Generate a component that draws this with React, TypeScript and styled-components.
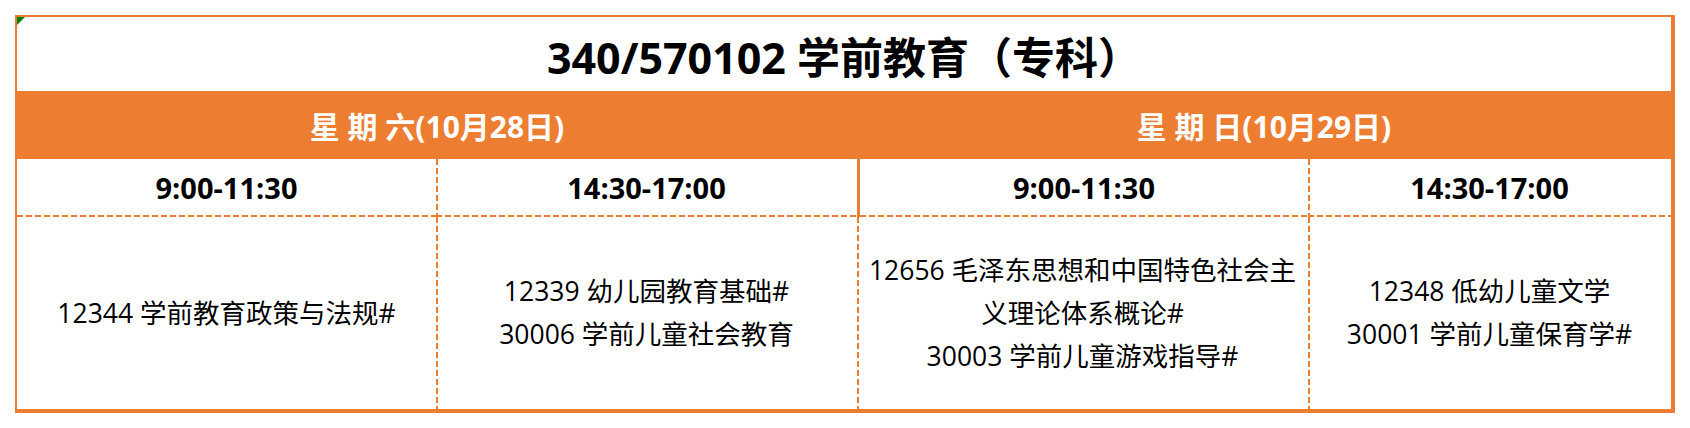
import React from "react";
import styled, { createGlobalStyle, css } from "styled-components";

const ORANGE = "#ED7D31";

type Session = {
    time: string;
    lines: string[];
    solidLeft?: boolean;
};

type Day = {
    label: string;
    sessions: Session[];
};

const days: Day[] = [
    {
        label: "星 期 六(10月28日)",
        sessions: [
            { time: "9:00-11:30", lines: ["12344 学前教育政策与法规#"] },
            { time: "14:30-17:00", lines: ["12339 幼儿园教育基础#", "30006 学前儿童社会教育"] },
        ],
    },
    {
        label: "星 期 日(10月29日)",
        sessions: [
            {
                time: "9:00-11:30",
                lines: ["12656 毛泽东思想和中国特色社会主", "义理论体系概论#", "30003 学前儿童游戏指导#"],
                solidLeft: true,
            },
            { time: "14:30-17:00", lines: ["12348 低幼儿童文学", "30001 学前儿童保育学#"] },
        ],
    },
];

// excel-ish dashes: 6px on, 3px off
const dashV = `repeating-linear-gradient(to bottom, ${ORANGE} 0 6px, transparent 6px 9px)`;
const dashH = `repeating-linear-gradient(to right, ${ORANGE} 0 6px, transparent 6px 9px)`;

const GlobalStyle = createGlobalStyle`
    html, body {
        margin: 0;
        padding: 0;
        background: #ffffff;
    }
    body {
        font-family: "Open Sans", "Noto Sans CJK SC", sans-serif;
    }
`;

const Page = styled.div`
    padding: 15px 0 0 15px;
`;

const Table = styled.div`
    position: relative;
    display: grid;
    grid-template-columns: 419px 421px 451px 363px;
    grid-template-rows: 74px 68px 58px 192px;
    width: 1654px;
    border-top: 2px solid ${ORANGE};
    border-left: 2px solid ${ORANGE};
    border-right: 4px solid ${ORANGE};
    border-bottom: 4px solid ${ORANGE};
    color: #000;
`;

const Marker = styled.div`
    position: absolute;
    top: 0;
    left: 0;
    width: 0;
    height: 0;
    border-top: 8px solid #008000;
    border-right: 8px solid transparent;
`;

const Title = styled.div`
    grid-column: 1 / span 4;
    display: flex;
    align-items: center;
    justify-content: center;
    font-size: 43px;
    font-weight: 700;
    padding-top: 2px;
`;

const DayCell = styled.div`
    grid-column: span 2;
    display: flex;
    align-items: center;
    justify-content: center;
    background: ${ORANGE};
    color: #fff;
    font-size: 30px;
    font-weight: 700;
    white-space: pre;
`;

const TimeCell = styled.div<{ $left?: "solid" | "dashed" }>`
    display: flex;
    align-items: center;
    justify-content: center;
    box-sizing: border-box;
    font-size: 29px;
    font-weight: 700;
    padding-bottom: 2px;
    background-repeat: no-repeat;
    ${(p) =>
        p.$left === "dashed"
            ? css`
                  background-image: ${dashH}, ${dashV};
                  background-size: 100% 2px, 2px 100%;
                  background-position: left bottom, left top;
              `
            : css`
                  background-image: ${dashH};
                  background-size: 100% 2px;
                  background-position: left bottom;
              `}
    border-left: ${(p) => (p.$left === "solid" ? `3px solid ${ORANGE}` : "none")};
`;

const CourseCell = styled.div<{ $first?: boolean }>`
    display: flex;
    flex-direction: column;
    align-items: center;
    justify-content: center;
    font-size: 26.5px;
    line-height: 43px;
    background-repeat: no-repeat;
    background-image: ${(p) => (p.$first ? "none" : dashV)};
    background-size: 2px 100%;
    background-position: left top;
`;

const CourseLine = styled.div`
    white-space: nowrap;
`;

const App: React.FC = () => {
    const sessions = days.flatMap((d) => d.sessions);

    return (
        <Page>
            <GlobalStyle />
            <Table>
                <Marker />
                <Title>340/570102 学前教育（专科）</Title>
                {days.map((day, index) => (
                    <DayCell key={index}>{day.label}</DayCell>
                ))}
                {sessions.map((s, index) => (
                    <TimeCell key={index} $left={index === 0 ? undefined : s.solidLeft ? "solid" : "dashed"}>
                        {s.time}
                    </TimeCell>
                ))}
                {sessions.map((s, index) => (
                    <CourseCell key={index} $first={index === 0}>
                        {s.lines.map((line, i) => (
                            <CourseLine key={i}>{line}</CourseLine>
                        ))}
                    </CourseCell>
                ))}
            </Table>
        </Page>
    );
};

export default App;
